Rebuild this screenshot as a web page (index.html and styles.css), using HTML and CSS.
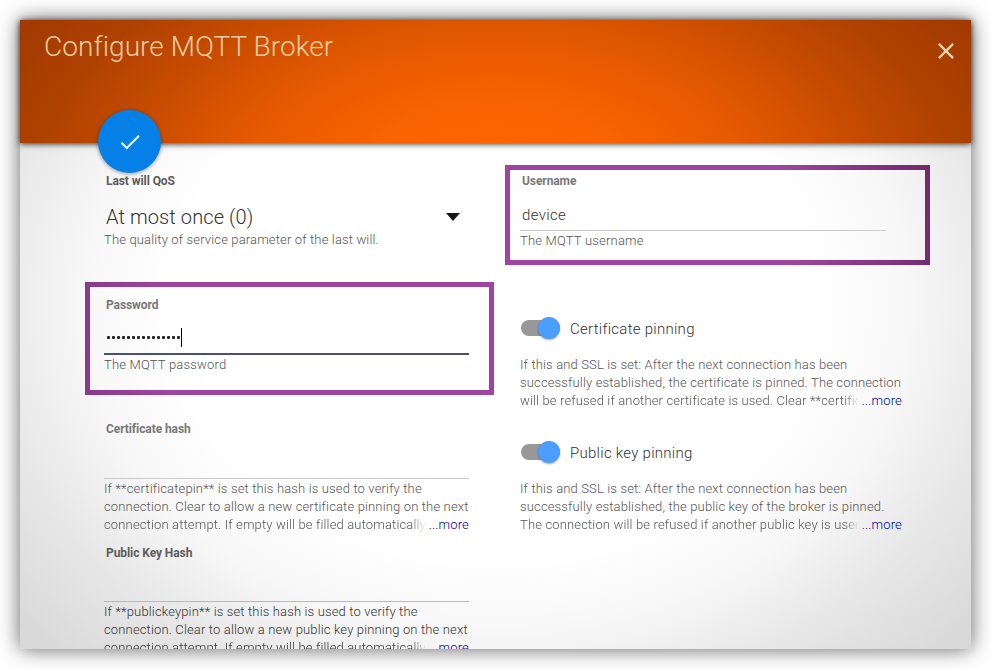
FILE: index.html
```html
<!DOCTYPE html>
<html lang="en">
<head>
<meta charset="utf-8">
<title>Configure MQTT Broker</title>
<link rel="stylesheet" href="styles.css">
</head>
<body>
<main class="dialog">
  <header class="header">
    <h1 class="title">Configure MQTT Broker</h1>
    <svg class="close" viewBox="0 0 16 16" width="16" height="16"><path d="M.9.9 15.1 15.1M15.1.9.9 15.1"/></svg>
    <div class="fab"><svg viewBox="0 0 24 24" width="26" height="26"><path d="M9 16.17 4.83 12l-1.42 1.41L9 19 21 7l-1.41-1.41z"/></svg></div>
  </header>
  <div class="form">
    <section class="col col-left">
      <div class="field">
        <div class="label dark">Last will QoS</div>
        <div class="select"><span>At most once (0)</span><svg viewBox="0 0 14 8" width="14" height="8"><path d="M0 0h14L7 8z"/></svg></div>
        <p class="hint raised">The quality of service parameter of the last will.</p>
      </div>
      <div class="field marked marked-password">
        <div class="label">Password</div>
        <div class="input focused"><span class="dots"></span><span class="caret"></span></div>
        <p class="hint">The MQTT password</p>
      </div>
      <div class="field">
        <div class="label">Certificate hash</div>
        <div class="input"></div>
        <div class="hint long"><span>If **certificatepin** is set this hash is used to verify the</span><span>connection. Clear to allow a new certificate pinning on the next</span><span>connection attempt. If empty will be filled automatically</span><a class="more">...more</a></div>
      </div>
      <div class="field deep">
        <div class="label dark">Public Key Hash</div>
        <div class="input"></div>
        <div class="hint long dark"><span>If **publickeypin** is set this hash is used to verify the</span><span>connection. Clear to allow a new public key pinning on the next</span><span>connection attempt. If empty will be filled automatically</span><a class="more">...more</a></div>
      </div>
    </section>
    <section class="col col-right">
      <div class="field marked marked-username">
        <div class="label">Username</div>
        <div class="input">device</div>
        <p class="hint">The MQTT username</p>
      </div>
      <div class="field">
        <div class="toggle"><span class="switch"><span class="knob"></span></span><span class="name">Certificate pinning</span></div>
        <div class="hint long"><span>If this and SSL is set: After the next connection has been</span><span>successfully established, the certificate is pinned. The connection</span><span>will be refused if another certificate is used. Clear **certific</span><a class="more">...more</a></div>
      </div>
      <div class="field">
        <div class="toggle"><span class="switch"><span class="knob"></span></span><span class="name">Public key pinning</span></div>
        <div class="hint long"><span>If this and SSL is set: After the next connection has been</span><span>successfully established, the public key of the broker is pinned.</span><span>The connection will be refused if another public key is used</span><a class="more">...more</a></div>
      </div>
    </section>
  </div>
</main>
<script src="script.js"></script>
</body>
</html>
```
FILE: script.js
```js
document.querySelector('.dots').innerHTML = '<i></i>'.repeat(15);
```
FILE: styles.css
```css
* { box-sizing: border-box; }
body { margin: 0; padding: 20px; height: 669px; overflow: hidden; background: #fff; font-family: Roboto, "Liberation Sans", sans-serif; font-weight: 300; }
.dialog { width: 951px; height: 629px; display: flex; flex-direction: column; box-shadow: 0 0 20px rgba(0,0,0,.62); }
.header { position: relative; z-index: 1; flex: none; height: 123px; padding: 11px 17px 0 24px; display: flex; justify-content: space-between; align-items: flex-start; background: radial-gradient(ellipse 560px 320px at 476px 165px, #ff6600 0%, #fa6300 24%, #e65a00 45%, #c84c00 65%, #ad4100 83%, #a03a00 100%); box-shadow: 0 1px 6px rgba(0,0,0,.8); }
.title { margin: 0; font-size: 28px; line-height: 32px; font-weight: 300; letter-spacing: .05px; color: #ebcda2; }
.close { margin-top: 12px; fill: none; stroke: #ead7b5; stroke-width: 2.2; }
.fab { position: absolute; left: 78px; top: 90px; width: 63px; height: 63px; border-radius: 50%; display: flex; align-items: center; justify-content: center; background: #0580e6; box-shadow: 0 1px 4px rgba(0,0,0,.4); }
.fab svg { fill: #e0f4ed; }
.form { flex: 1; min-height: 0; overflow: hidden; display: flex; gap: 51px; padding: 29px 67px 0 84px; background: radial-gradient(ellipse 640px 510px at 476px 160px, #fff 0%, #fff 50%, #f7f7f7 65%, #e8e8e8 79%, #dadada 96%, #d8d8d8 100%); }
.col-left { width: 365px; }
.col-right { width: 384px; }
.field { position: relative; height: 124px; }
.label { height: 18px; padding-left: 2px; font-size: 12px; line-height: 18px; font-weight: 700; letter-spacing: -.08px; color: #777; }
.label.dark { color: #5c5c5c; }
.input { display: flex; align-items: center; width: 366px; height: 41px; padding: 9px 2px 0; border-bottom: 1px solid #c9c9c9; font-size: 15px; letter-spacing: .35px; color: #333; }
.deep .input { height: 40px; border-color: #b8b8b8; }
.col-left .input { width: 365px; }
.input.focused { border-bottom: 2px solid #485175; height: 41px; padding-top: 7px; }
.hint { width: 400px; margin: 1px 0 0; font-size: 13px; line-height: 18px; color: #555; white-space: nowrap; letter-spacing: .15px; }
.marked .hint { letter-spacing: .2px; }
.hint.raised { margin-top: 0; }
.hint.dark { color: #333; }
.select { display: flex; align-items: center; justify-content: space-between; height: 41px; padding: 12px 9px 0 2px; font-size: 20px; letter-spacing: .1px; color: #333; }
.select svg { fill: #181818; }
.dots { display: flex; gap: 2px; padding-left: 1px; }
.dots i { width: 3px; height: 3px; border-radius: 1px; background: #222; }
.caret { width: 1px; height: 19px; margin-left: 1px; background: #000; }
.toggle { display: flex; align-items: center; gap: 10px; height: 59px; padding: 5px 0 0 1px; font-size: 15px; letter-spacing: .27px; color: #333; }
.name { padding-top: 2px; }
.switch { position: relative; width: 39px; height: 16px; border-radius: 8px; background: #989898; }
.knob { position: absolute; left: 17px; top: -3px; width: 22px; height: 22px; border-radius: 50%; background: #4b9efb; box-shadow: 0 1px 2px rgba(0,0,0,.35); }
.long { position: relative; width: 365px; }
.col-right .long { width: 382px; }
.long span { display: block; }
.long span:nth-child(3) { width: calc(100% - 43px); overflow: hidden; -webkit-mask-image: linear-gradient(to right, #000 calc(100% - 14px), transparent); mask-image: linear-gradient(to right, #000 calc(100% - 14px), transparent); }
.more { position: absolute; right: 0; top: 36px; color: #0000a0; }
.marked::after { content: ""; position: absolute; box-sizing: border-box; border: 5px solid #a0459f; }
.marked-password::after { left: -19px; top: -14px; width: 409px; height: 113px; border-image: linear-gradient(90deg, #883a8b, #a0459f 20%) 5; }
.marked-username::after { left: -15px; top: -7px; width: 425px; height: 100px; border-image: linear-gradient(80deg, #a0459f 65%, #70296f) 5; }
```
